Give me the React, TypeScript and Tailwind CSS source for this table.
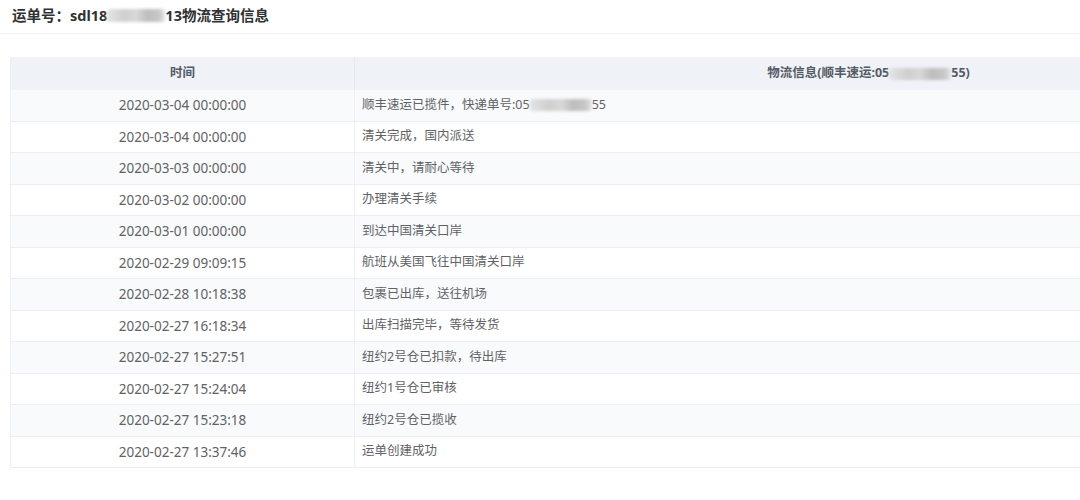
import React from "react";

const rows: [string, React.ReactNode][] = [
  ["2020-03-04 00:00:00", "__first__"],
  ["2020-03-04 00:00:00", "清关完成，国内派送"],
  ["2020-03-03 00:00:00", "清关中，请耐心等待"],
  ["2020-03-02 00:00:00", "办理清关手续"],
  ["2020-03-01 00:00:00", "到达中国清关口岸"],
  ["2020-02-29 09:09:15", "航班从美国飞往中国清关口岸"],
  ["2020-02-28 10:18:38", "包裹已出库，送往机场"],
  ["2020-02-27 16:18:34", "出库扫描完毕，等待发货"],
  ["2020-02-27 15:27:51", "纽约2号仓已扣款，待出库"],
  ["2020-02-27 15:24:04", "纽约1号仓已审核"],
  ["2020-02-27 15:23:18", "纽约2号仓已揽收"],
  ["2020-02-27 13:37:46", "运单创建成功"],
];

function Blur({ w, h = 12 }: { w: number; h?: number }) {
  return (
    <span
      className="inline-block align-middle rounded-[3px] blur-[1.5px]"
      style={{
        width: w,
        height: h,
        background:
          "linear-gradient(90deg,#e4e4e4 0%,#cfcfcf 30%,#d8d8d8 50%,#bdbdbd 70%,#c8c8c8 90%,#e6e6e6 100%)",
      }}
    />
  );
}

export default function App() {
  return (
    <div
      className="w-[1080px] h-[500px] bg-white overflow-hidden"
      style={{ fontFamily: '"Noto Sans", "Noto Sans CJK SC", sans-serif' }}
    >
      <div className="h-[34px] border-b border-[#f0f1f3] flex items-center pl-[12px] pb-[2px]">
        <span className="text-[14.5px] font-bold text-[#303133] leading-none flex items-center">
          运单号：sdl18
          <Blur w={58} h={13} />
          13物流查询信息
        </span>
      </div>
      <div className="pl-[10px] pt-[23px]">
        <div className="w-[1372px] border-l border-[#ebeef5]">
          <div className="flex h-[33px] bg-[#eff2f6] text-[12.5px] font-bold text-[#555b66]">
            <div className="w-[344px] flex items-center justify-center border-r border-[#e6e9ef]">
              时间
            </div>
            <div className="flex-1 flex items-center justify-center">
              物流信息(顺丰速运:05
              <Blur w={62} />
              55)
            </div>
          </div>
          {rows.map(([t, info], i) => (
            <div
              key={i}
              className={`flex h-[31.5px] border-b border-[#ebeef5] text-[12.5px] text-[#606266] ${
                i % 2 === 0 ? "bg-[#f9fafc]" : "bg-white"
              }`}
            >
              <div className="w-[344px] flex items-center justify-center border-r border-[#ebeef5] text-[13.5px]">
                {t}
              </div>
              <div className="flex-1 flex items-center pl-[7px]">
                {info === "__first__" ? (
                  <>
                    顺丰速运已揽件，快递单号:05
                    <Blur w={62} />
                    55
                  </>
                ) : (
                  info
                )}
              </div>
            </div>
          ))}
        </div>
      </div>
    </div>
  );
}
